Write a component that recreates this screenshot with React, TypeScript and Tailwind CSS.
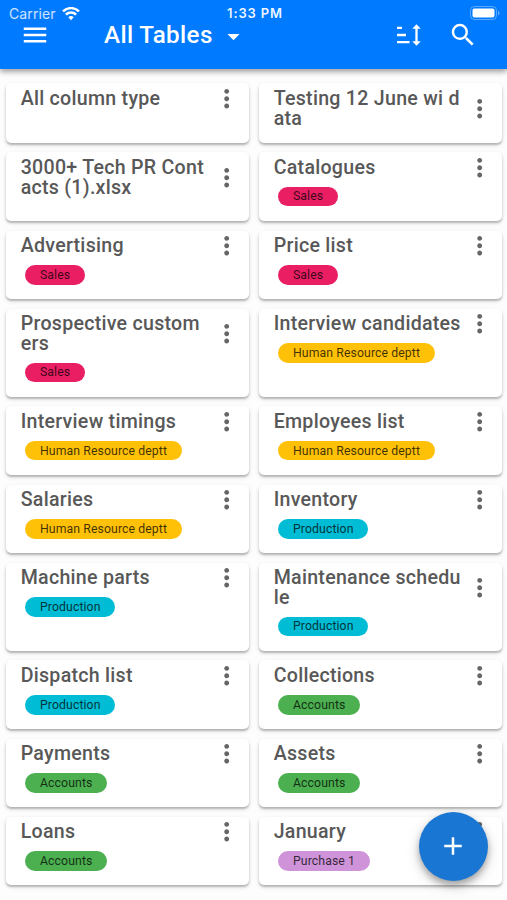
import { MdMoreVert, MdMenu, MdSearch, MdAdd, MdArrowDropDown } from 'react-icons/md';

const tagColors: any = {
  Sales: 'bg-[#e91e63]',
  'Human Resource deptt': 'bg-[#ffc107]',
  Production: 'bg-[#00bcd4]',
  Accounts: 'bg-[#4caf50]',
  'Purchase 1': 'bg-[#ce93d8]',
};

const tables = [
  { name: 'All column type' },
  { name: 'Testing 12 June wi data' },
  { name: '3000+ Tech PR Contacts (1).xlsx' },
  { name: 'Catalogues', tag: 'Sales' },
  { name: 'Advertising', tag: 'Sales' },
  { name: 'Price list', tag: 'Sales' },
  { name: 'Prospective customers', tag: 'Sales' },
  { name: 'Interview candidates', tag: 'Human Resource deptt' },
  { name: 'Interview timings', tag: 'Human Resource deptt' },
  { name: 'Employees list', tag: 'Human Resource deptt' },
  { name: 'Salaries', tag: 'Human Resource deptt' },
  { name: 'Inventory', tag: 'Production' },
  { name: 'Machine parts', tag: 'Production' },
  { name: 'Maintenance schedule', tag: 'Production' },
  { name: 'Dispatch list', tag: 'Production' },
  { name: 'Collections', tag: 'Accounts' },
  { name: 'Payments', tag: 'Accounts' },
  { name: 'Assets', tag: 'Accounts' },
  { name: 'Loans', tag: 'Accounts' },
  { name: 'January', tag: 'Purchase 1' },
];

const TableCard = ({ name, tag }: any) => (
  <div className="bg-white rounded-[5px] pt-[5.7px] pb-[14.3px] pl-[14.7px] pr-[7.4px] shadow-[0_2px_2px_rgba(0,0,0,0.22),0_2px_5px_rgba(0,0,0,0.12)]">
    <div className="flex items-center justify-between">
      <h2 className="w-[188.6px] text-[19.6px] leading-[19.6px] font-medium tracking-[0.27px] text-[#585858] break-all">{name}</h2>
      <button className="flex items-center h-[19.6px] -mt-[0.6px]"><MdMoreVert size={29.4} className="text-[#666] shrink-0" /></button>
    </div>
    {tag && (
      <span className={`flex items-center w-fit h-[19.6px] mt-[9.2px] ml-[4.6px] px-[14.7px] rounded-full text-[12.25px] tracking-[0.1px] text-black/75 whitespace-nowrap ${tagColors[tag]}`}>{tag}</span>
    )}
  </div>
);

const StatusBar = () => (
  <div className="grid grid-cols-3 items-center h-[27px] pl-[9px] pr-[6px] text-[13px] font-['Inter',sans-serif]">
    <div className="flex items-center gap-[6px] text-white/80">
      <span className="text-[14px] tracking-[0.1px]">Carrier</span>
      <svg width="18" height="14" viewBox="0 0 18 14" fill="none" stroke="white" strokeWidth="2.5">
        <path d="M1 4.4a11.4 11.4 0 0 1 16 0" />
        <path d="M3.9 7.6a7.2 7.2 0 0 1 10.2 0" />
        <path d="M9 13.3l-2.7-3a3.8 3.8 0 0 1 5.4 0z" fill="white" stroke="none" />
      </svg>
    </div>
    <span className="mt-px text-center font-semibold whitespace-nowrap text-white/95 tracking-[0.85px]">1:33 PM</span>
    <svg className="justify-self-end -mt-px" width="31" height="14" viewBox="0 0 31 14">
      <rect x="0.5" y="0.5" width="26" height="13" rx="4" fill="none" stroke="white" strokeOpacity="0.35" />
      <rect x="2.5" y="2.5" width="22" height="9" rx="2" fill="white" />
      <path d="M28 4.7v4.6q1.6-.7 1.6-2.3t-1.6-2.3z" fill="white" fillOpacity="0.4" />
    </svg>
  </div>
);

export default function App() {
  return (
    <div className="relative w-[507px] h-[900px] overflow-hidden bg-[#fdfdfd] font-['Roboto',sans-serif]">
      <header className="relative h-[69px] bg-[#007aff] text-white shadow-[0_3px_5px_rgba(0,0,0,0.28),0_1px_8px_rgba(0,0,0,0.15)]">
        <StatusBar />
        <div className="flex items-center h-[17px] pl-[20px] pr-[29px]">
          <MdMenu size={30} className="-mt-px" />
          <h1 className="ml-[54px] text-[24.2px] leading-none font-medium tracking-[0.35px]">All Tables</h1>
          <MdArrowDropDown size={29} className="ml-[6px] mt-[2px]" />
          <div className="flex items-center gap-[27px] ml-auto -mt-px">
            <svg width="25" height="24" viewBox="0 0 25 24" fill="none" stroke="white" strokeWidth="2.3">
              <path d="M1 4.8h5M1 12h9M1 19.2h12.5" />
              <path d="M20.5 5v14" />
              <path d="M16.3 5.8l4.2-4.5 4.2 4.5zM16.3 18.2l4.2 4.5 4.2-4.5z" fill="white" stroke="none" />
            </svg>
            <MdSearch size={30} />
          </div>
        </div>
      </header>

      <main className="grid grid-cols-2 gap-y-[9.8px] gap-x-[10px] pt-[14.4px] pl-[6px] pr-[5px]">
        {tables.map((t) => <TableCard key={t.name} {...t} />)}
      </main>

      <button className="absolute left-[418.5px] top-[812px] w-[69px] h-[69px] rounded-full bg-[#1976d2] text-white flex items-center justify-center shadow-[0_4px_6px_rgba(0,0,0,0.26),0_5px_14px_rgba(0,0,0,0.18)]">
        <MdAdd size={30} className="-mt-px" />
      </button>
    </div>
  );
}
